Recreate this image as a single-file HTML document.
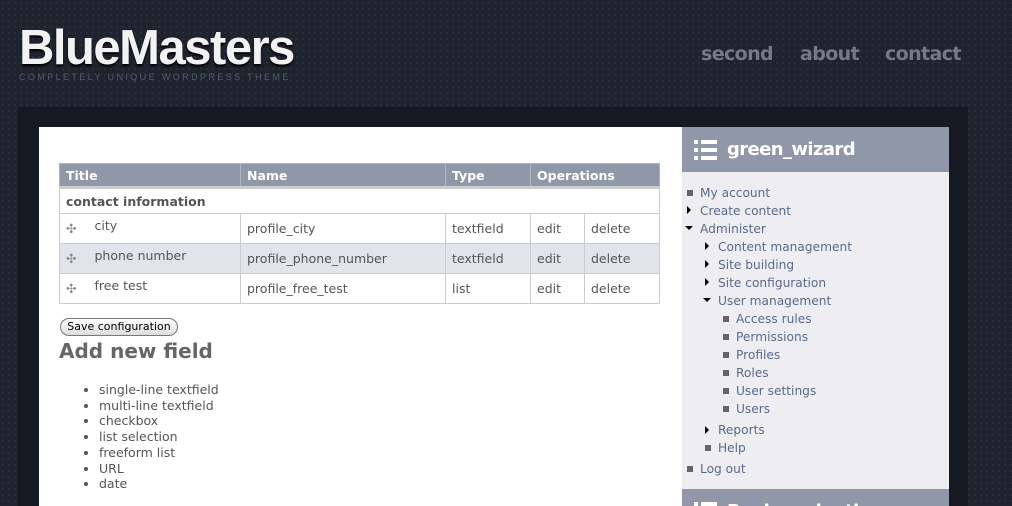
<!DOCTYPE html>
<html style="overflow:hidden;height:506px"><head><style>
*{margin:0;padding:0;box-sizing:border-box}
body{width:1012px;height:506px;overflow:hidden;background:#1f232d;font-family:"DejaVu Sans","Liberation Sans",sans-serif;position:relative;
background-image:radial-gradient(#2a2f3a 1px,transparent 1.2px);background-size:6px 6px}
.logo{position:absolute;left:19px;top:20px;font:bold 49px "Liberation Sans",sans-serif;color:#f2f2f2;letter-spacing:-1.5px;text-shadow:0 2px 2px #000}
.tag{position:absolute;left:19px;top:72px;font:9px "Liberation Sans",sans-serif;color:#535c6c;letter-spacing:2.4px}
.nav{position:absolute;top:43px;font:bold 19px "DejaVu Sans",sans-serif;color:#737987;letter-spacing:-0.6px}
.outer{position:absolute;left:18px;top:107px;width:950px;height:399px;background:#161921}
.main{position:absolute;left:39px;top:127px;width:643px;height:379px;background:#fff}
.side{position:absolute;left:682px;top:127px;width:267px;height:379px;background:#ededf2;overflow:hidden}
.sh{position:absolute;left:0;width:267px;height:45px;background:#9097a8;color:#fff;font:bold 18px "DejaVu Sans",sans-serif;letter-spacing:-0.6px;padding:12px 0 0 45px}
.ic{position:absolute;left:12px;top:12px}
table{position:absolute;left:59px;top:163px;border-collapse:collapse;font-size:12.5px;color:#555}
td,th{border:1px solid #ccc;padding:0 6px;height:30px;text-align:left}
th{background:#9097a8;color:#fff;height:24px;font-size:12.5px;border-color:#b0b4c0;border-bottom:3px solid #ccc}
tr.alt td{background:#e2e4ec}
.s{position:absolute;font-size:12.2px;color:#5b6b8c;margin-top:1px}
.b{position:absolute;width:6px;height:6px;background:#666}
.t{position:absolute;width:0;height:0;border-left:4px solid #000;border-top:4px solid transparent;border-bottom:4px solid transparent}
.td{position:absolute;width:0;height:0;border-top:4px solid #000;border-left:4px solid transparent;border-right:4px solid transparent}
ul{position:absolute;left:99px;top:382px;font-size:12.5px;color:#555;line-height:15.7px}
</style></head><body>
<div class="logo">BlueMasters</div>
<div class="tag">COMPLETELY UNIQUE WORDPRESS THEME</div>
<div class="nav" style="left:701px">second</div>
<div class="nav" style="left:800px">about</div>
<div class="nav" style="left:885px">contact</div>
<div class="outer"></div>
<div class="main"></div>
<table>
<tr><th style="width:181px">Title</th><th style="width:205px">Name</th><th style="width:85px">Type</th><th colspan="2">Operations</th></tr>
<tr><td colspan="5" style="height:26px;font-weight:bold">contact information</td></tr>
<tr><td><span style="color:#888">✣</span><span style="margin-left:18px;position:relative;top:-3px">city</span></td><td>profile_city</td><td>textfield</td><td style="width:54px">edit</td><td style="width:75px">delete</td></tr>
<tr class="alt"><td><span style="color:#888">✣</span><span style="margin-left:18px;position:relative;top:-3px">phone number</span></td><td>profile_phone_number</td><td>textfield</td><td>edit</td><td>delete</td></tr>
<tr><td><span style="color:#888">✣</span><span style="margin-left:18px;position:relative;top:-3px">free test</span></td><td>profile_free_test</td><td>list</td><td>edit</td><td>delete</td></tr>
</table>
<div style="position:absolute;left:60px;top:318px;width:118px;height:18px;border:1px solid #777;border-radius:9px;background:linear-gradient(#fff,#ddd);font-size:11px;text-align:center;line-height:16px;color:#000">Save configuration</div>
<div style="position:absolute;left:59px;top:339px;font:bold 20px 'DejaVu Sans',sans-serif;color:#666">Add new field</div>
<ul><li>single-line textfield</li><li>multi-line textfield</li><li>checkbox</li><li>list selection</li><li>freeform list</li><li>URL</li><li>date</li></ul>
<div class="side">
<div class="sh" style="top:0">
<svg class="ic" width="24" height="22" fill="#fff"><rect x="0" y="1" width="4" height="4"/><rect x="0" y="9" width="4" height="4"/><rect x="0" y="17" width="4" height="4"/><rect x="7" y="1" width="16" height="4"/><rect x="7" y="9" width="16" height="4"/><rect x="7" y="17" width="16" height="4"/></svg>green_wizard</div>
<div class="sh" style="top:362px"><svg class="ic" width="24" height="22" fill="#fff"><rect x="0" y="1" width="4" height="4"/><rect x="7" y="1" width="16" height="4"/></svg>Book navigation</div>
</div>
<div class="b" style="left:687px;top:190px"></div><div class="s" style="left:700px;top:185px">My account</div>
<div class="t" style="left:687px;top:206px"></div><div class="s" style="left:700px;top:203px">Create content</div>
<div class="td" style="left:685px;top:226px"></div><div class="s" style="left:700px;top:221px">Administer</div>
<div class="t" style="left:705px;top:242px"></div><div class="s" style="left:718px;top:239px">Content management</div>
<div class="t" style="left:705px;top:260px"></div><div class="s" style="left:718px;top:257px">Site building</div>
<div class="t" style="left:705px;top:278px"></div><div class="s" style="left:718px;top:275px">Site configuration</div>
<div class="td" style="left:703px;top:298px"></div><div class="s" style="left:718px;top:293px">User management</div>
<div class="b" style="left:723px;top:316px"></div><div class="s" style="left:736px;top:311px">Access rules</div>
<div class="b" style="left:723px;top:334px"></div><div class="s" style="left:736px;top:329px">Permissions</div>
<div class="b" style="left:723px;top:352px"></div><div class="s" style="left:736px;top:347px">Profiles</div>
<div class="b" style="left:723px;top:370px"></div><div class="s" style="left:736px;top:365px">Roles</div>
<div class="b" style="left:723px;top:388px"></div><div class="s" style="left:736px;top:383px">User settings</div>
<div class="b" style="left:723px;top:406px"></div><div class="s" style="left:736px;top:401px">Users</div>
<div class="t" style="left:705px;top:426px"></div><div class="s" style="left:718px;top:422px">Reports</div>
<div class="b" style="left:705px;top:445px"></div><div class="s" style="left:718px;top:440px">Help</div>
<div class="b" style="left:687px;top:466px"></div><div class="s" style="left:700px;top:461px">Log out</div>
</body></html>
